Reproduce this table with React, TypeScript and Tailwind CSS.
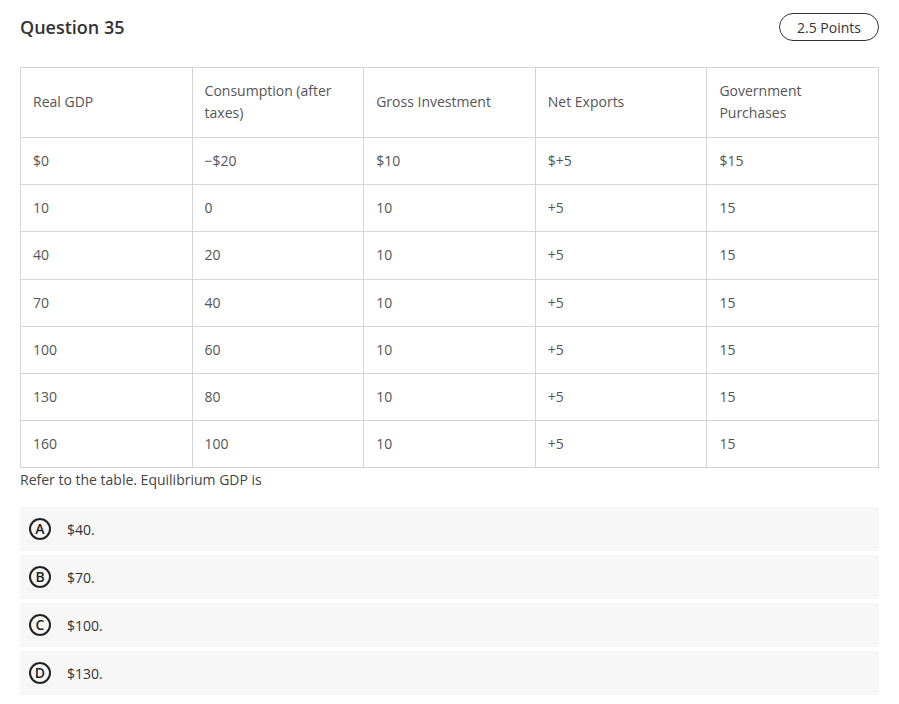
const HEADERS = [
  'Real GDP',
  'Consumption (after taxes)',
  'Gross Investment',
  'Net Exports',
  'Government Purchases',
];

const ROWS = [
  ['$0', '\u2212$20', '$10', '$+5', '$15'],
  ['10', '0', '10', '+5', '15'],
  ['40', '20', '10', '+5', '15'],
  ['70', '40', '10', '+5', '15'],
  ['100', '60', '10', '+5', '15'],
  ['130', '80', '10', '+5', '15'],
  ['160', '100', '10', '+5', '15'],
];

const OPTIONS = [
  { letter: 'A', text: '$40.' },
  { letter: 'B', text: '$70.' },
  { letter: 'C', text: '$100.' },
  { letter: 'D', text: '$130.' },
];

export default function App() {
  return (
    <div
      className="w-[899px] h-[704px] bg-white text-[#333] overflow-hidden"
      style={{ fontFamily: '"Open Sans", "Liberation Sans", sans-serif' }}
    >
      <div className="pl-5 pr-[20px] pt-[13px]">
        <div className="flex items-center justify-between h-[28px]">
          <h2 className="text-[18px] font-semibold text-[#333] leading-none">Question 35</h2>
          <span className="h-[28px] px-[17px] flex items-center rounded-full border border-[#333] text-[14px] text-[#333]">
            2.5 Points
          </span>
        </div>

        <table className="mt-[26px] w-[859px] table-fixed border-collapse text-[14px] leading-[22px] text-[#555]">
          <thead>
            <tr>
              {HEADERS.map((h) => (
                <th
                  key={h}
                  className="border border-[#d4d4d4] px-3 pt-[11px] pb-[13px] h-[70px] text-left font-normal align-middle"
                >
                  {h}
                </th>
              ))}
            </tr>
          </thead>
          <tbody>
            {ROWS.map((row, i) => (
              <tr key={i}>
                {row.map((cell, j) => (
                  <td key={j} className="border border-[#d4d4d4] px-3 py-[12px] h-[47.2px] align-middle">
                    {cell}
                  </td>
                ))}
              </tr>
            ))}
          </tbody>
        </table>

        <p className="mt-[1px] text-[14px] leading-[22px] text-[#444]">Refer to the table. Equilibrium GDP is</p>

        <div className="mt-[16px] flex flex-col gap-[4px] w-[859px]">
          {OPTIONS.map((o) => (
            <div key={o.letter} className="h-[44px] bg-[#f7f7f7] flex items-center pl-[9px]">
              <span className="w-[22px] h-[22px] rounded-full border-2 border-[#222] flex items-center justify-center text-[14px] font-semibold text-[#222] leading-none">
                {o.letter}
              </span>
              <span className="ml-[16px] text-[14px] text-[#333]">{o.text}</span>
            </div>
          ))}
        </div>
      </div>
    </div>
  );
}
